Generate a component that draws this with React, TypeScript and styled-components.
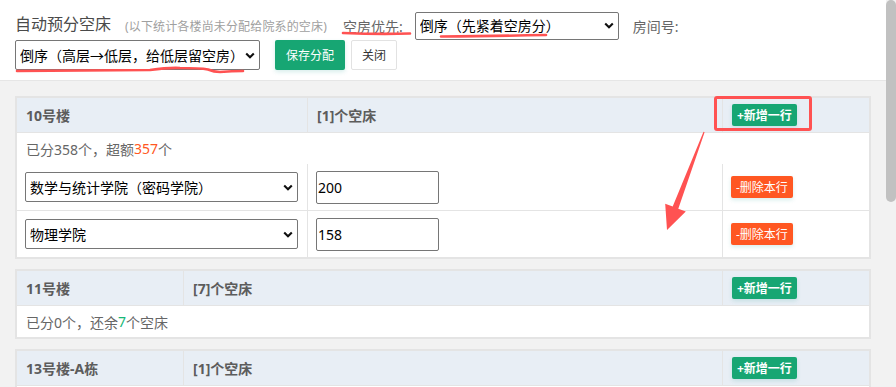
import styled, { createGlobalStyle } from 'styled-components';

const GlobalStyle = createGlobalStyle`
  html, body {
    margin: 0;
    padding: 0;
    overflow: hidden;
  }
  body {
    font-family: "Noto Sans", "Noto Sans CJK SC", sans-serif;
    font-size: 14px;
    color: #333;
  }
`;

const chevron = encodeURIComponent(
  '<svg xmlns="http://www.w3.org/2000/svg" width="10" height="7" viewBox="0 0 10 7"><path d="M1.2 1.4L5 5.2l3.8-3.8" fill="none" stroke="#111" stroke-width="2.1"/></svg>'
);

const Frame = styled.div`
  display: flex;
  height: 100vh;
  background: #f2f2f2;
`;

const Viewport = styled.div`
  flex: 1;
  min-width: 0;
  overflow: hidden;
`;

const Track = styled.div`
  width: 10px;
  flex-shrink: 0;
  background: #f2f2f2;
`;

const Thumb = styled.div`
  height: 202px;
  background: #c1c1c1;
  border-radius: 5px;
`;

const Page = styled.div`
  position: relative;
`;

const Header = styled.div`
  background: #fff;
  border-bottom: 1px solid #e6e6e6;
  padding: 11px 15px 10px;
  display: flex;
  flex-direction: column;
`;

const ToolRow = styled.div<{ $h: number }>`
  display: flex;
  align-items: center;
  height: ${({ $h }) => $h}px;
`;

const Title = styled.span`
  font-size: 16px;
  color: #4a4a4a;
  margin-top: -5px;
`;

const Sub = styled.span`
  font-size: 12px;
  color: #a0a0a0;
  margin-left: 14px;
  letter-spacing: 0.15px;
`;

const Label = styled.span<{ $ml: number }>`
  color: #666;
  margin-left: ${({ $ml }) => $ml}px;
  margin-right: 12px;
`;

const Select = styled.select<{ $w: number; $h: number }>`
  appearance: none;
  width: ${({ $w }) => $w}px;
  height: ${({ $h }) => $h}px;
  border: 1px solid #767676;
  border-radius: 2px;
  padding: 0 18px 0 4px;
  font-family: inherit;
  font-size: 14px;
  color: #000;
  background: #fff url("data:image/svg+xml,${chevron}") no-repeat right 4px center;
  outline: none;
`;

const Btn = styled.button<{ $tone: 'green' | 'plain' | 'red'; $size: 'sm' | 'xs' }>`
  height: ${({ $size }) => ($size === 'sm' ? 30 : 22)}px;
  padding: 0 ${({ $size }) => ($size === 'sm' ? 10 : 4)}px;
  font-family: inherit;
  font-size: 12px;
  font-weight: inherit;
  border-radius: 2px;
  cursor: pointer;
  white-space: nowrap;
  border: 1px solid
    ${({ $tone }) => ($tone === 'plain' ? '#e2e2e2' : 'transparent')};
  background: ${({ $tone }) =>
    $tone === 'green' ? '#17a673' : $tone === 'red' ? '#ff5722' : '#fff'};
  color: ${({ $tone }) => ($tone === 'plain' ? '#333' : '#fff')};
  box-shadow: ${({ $tone }) =>
    $tone === 'plain' ? 'none' : '0 2px 4px rgba(40, 160, 150, 0.18)'};
`;

const BtnGroup = styled.div`
  display: flex;
  gap: 6px;
  margin-left: 15px;
`;

const Body = styled.div`
  padding: 15px;
  display: flex;
  flex-direction: column;
  gap: 10px;
`;

const Card = styled.div`
  background: #fff;
  border: 2px solid #e4e4e4;
`;

const Row = styled.div<{ $c1: number; $head?: boolean }>`
  display: grid;
  grid-template-columns: ${({ $c1 }) => $c1}px 1fr 147px;
  height: ${({ $head }) => ($head ? 34 : 46)}px;
  background: ${({ $head }) => ($head ? '#e8eef5' : '#fff')};
  font-weight: ${({ $head }) => ($head ? 700 : 400)};
  color: #5c5c5c;
  & + & {
    border-top: 1px solid #e4e4e4;
  }
`;

const Cell = styled.div`
  display: flex;
  align-items: center;
  padding: 0 8px;
  & + & {
    border-left: 1px solid #e4e4e4;
  }
`;

const HeadCell = styled(Cell)`
  padding-left: 9px;
`;

const Info = styled.div`
  height: 31px;
  border-top: 1px solid #e4e4e4;
  display: flex;
  align-items: center;
  padding: 0 9px;
  color: #666;
`;

const Num = styled.span<{ $over: boolean }>`
  color: ${({ $over }) => ($over ? '#ff5722' : '#16b777')};
`;

const Input = styled.input`
  width: 123px;
  height: 33px;
  box-sizing: border-box;
  border: 1px solid #767676;
  border-radius: 2px;
  padding: 0 1px;
  font-family: inherit;
  font-size: 14px;
  color: #000;
  outline: none;
`;

const Marks = styled.svg`
  position: absolute;
  left: 0;
  top: 0;
  pointer-events: none;
`;

interface Building {
  name: string;
  beds: number;
  assigned: number;
  c1: number;
  items: { college: string; n: string }[];
}

const buildings: Building[] = [
  {
    name: '10号楼',
    beds: 1,
    assigned: 358,
    c1: 290,
    items: [
      { college: '数学与统计学院（密码学院）', n: '200' },
      { college: '物理学院', n: '158' },
    ],
  },
  { name: '11号楼', beds: 7, assigned: 0, c1: 166, items: [] },
  { name: '13号楼-A栋', beds: 1, assigned: 0, c1: 166, items: [] },
  { name: '13号楼-B栋', beds: 3, assigned: 0, c1: 166, items: [] },
  { name: '14号楼', beds: 2, assigned: 0, c1: 166, items: [] },
  { name: '15号楼', beds: 5, assigned: 0, c1: 166, items: [] },
];

function BuildingCard({ b }: { b: Building }) {
  const over = b.assigned > b.beds;
  return (
    <Card>
      <Row $c1={b.c1} $head>
        <HeadCell>{b.name}</HeadCell>
        <HeadCell>[{b.beds}]个空床</HeadCell>
        <HeadCell>
          <Btn $tone="green" $size="xs">+新增一行</Btn>
        </HeadCell>
      </Row>
      <Info>
        {over ? (
          <>
            已分{b.assigned}个，超额<Num $over>{b.assigned - b.beds}</Num>个
          </>
        ) : (
          <>
            已分{b.assigned}个，还余<Num $over={false}>{b.beds - b.assigned}</Num>个空床
          </>
        )}
      </Info>
      {b.items.map((it) => (
        <Row key={it.college} $c1={b.c1}>
          <Cell>
            <Select $w={273} $h={30} defaultValue={it.college}>
              <option>{it.college}</option>
            </Select>
          </Cell>
          <Cell>
            <Input defaultValue={it.n} />
          </Cell>
          <Cell>
            <Btn $tone="red" $size="xs">-删除本行</Btn>
          </Cell>
        </Row>
      ))}
    </Card>
  );
}

export default function App() {
  return (
    <>
      <GlobalStyle />
      <Frame>
        <Viewport>
          <Page>
            <Header>
              <ToolRow $h={29}>
                <Title>自动预分空床</Title>
                <Sub>(以下统计各楼尚未分配给院系的空床)</Sub>
                <Label $ml={16}>空房优先:</Label>
                <Select $w={204} $h={28} defaultValue="a">
                  <option value="a">倒序（先紧着空房分）</option>
                </Select>
                <Label $ml={14}>房间号:</Label>
              </ToolRow>
              <ToolRow $h={30}>
                <Select $w={245} $h={30} defaultValue="a">
                  <option value="a">倒序（高层→低层，给低层留空房）</option>
                </Select>
                <BtnGroup>
                  <Btn $tone="green" $size="sm">保存分配</Btn>
                  <Btn $tone="plain" $size="sm">关闭</Btn>
                </BtnGroup>
              </ToolRow>
            </Header>
            <Body>
              {buildings.map((b) => (
                <BuildingCard key={b.name} b={b} />
              ))}
            </Body>
            <Marks width="886" height="400" viewBox="0 0 886 400">
              <g fill="none" stroke="#ff5252" strokeWidth="2.6" strokeLinecap="round">
                <path d="M343 33 Q380 34.5 410 33.5" />
                <path d="M441 36.5 Q500 36 546 35" />
                <path d="M17 71 Q90 70.5 150 70 Q168 67.5 180 68 Q200 68 208 69.5 Q214 72 220 72 Q232 71 243 71" />
                <rect x="715.5" y="97.5" width="95" height="32" rx="1.5" strokeWidth="3" />
              </g>
              <polygon
                fill="#ff5252"
                points="703.5,131.8 672.7,206.5 665.2,203.7 667,230 685.8,211.5 678.3,208.7 704.6,132.2"
              />
            </Marks>
          </Page>
        </Viewport>
        <Track>
          <Thumb />
        </Track>
      </Frame>
    </>
  );
}
